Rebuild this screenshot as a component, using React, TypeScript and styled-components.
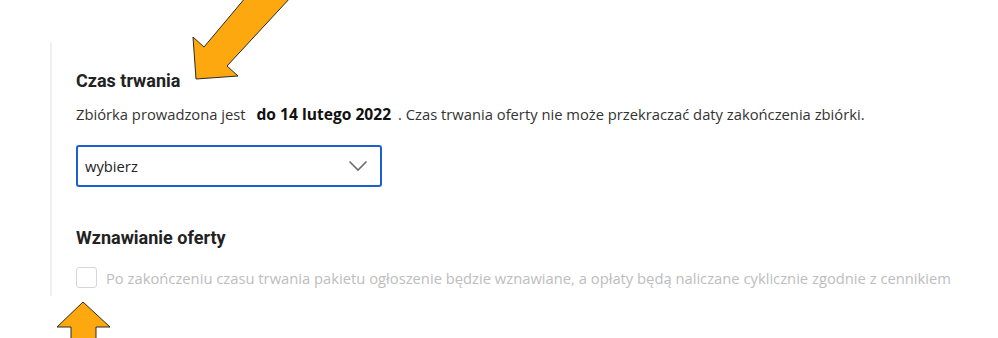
import React from "react";
import styled, {createGlobalStyle} from "styled-components";

const GlobalStyle = createGlobalStyle`
  html, body {
    margin: 0;
    padding: 0;
    background: #ffffff;
  }
  body {
    width: 998px;
    height: 338px;
    overflow: hidden;
    font-family: "Open Sans", "Liberation Sans", sans-serif;
    color: #2b2b2b;
  }
`;

const Page = styled.div`
  position: relative;
  width: 998px;
  height: 338px;
  padding: 42px 0 0 50px;
  box-sizing: border-box;
`;

const Section = styled.div`
  border-left: 2px solid #efefef;
  padding: 28px 0 8px 24px;
  height: 254px;
  box-sizing: border-box;
  display: flex;
  flex-direction: column;
`;

const Heading = styled.h3<{spaced?: boolean}>`
  margin: ${({spaced}) => (spaced ? "40px 0 0" : "0")};
  font-family: Roboto, "Liberation Sans", sans-serif;
  font-weight: 700;
  font-size: 18px;
  line-height: 22px;
  color: #222222;
`;

const Info = styled.p`
  margin: 12px 0 0;
  font-size: 14.75px;
  line-height: 20px;
  color: #333333;

  strong {
    font-size: 15.6px;
    font-weight: 700;
    color: #111111;
    margin: 0 7px 0 7px;
  }
`;

const Select = styled.div`
  margin-top: 21px;
  width: 306px;
  height: 42px;
  box-sizing: border-box;
  border: 2px solid #1d5fd1;
  border-radius: 3px;
  display: flex;
  align-items: center;
  justify-content: space-between;
  padding: 0 12px 0 7px;
  font-size: 14.75px;
  color: #222222;
`;

const CheckRow = styled.label`
  margin-top: 18px;
  display: flex;
  align-items: center;
  gap: 9px;
  font-size: 14.75px;
  color: #bdbdbd;
`;

const Box = styled.span`
  width: 21px;
  height: 21px;
  box-sizing: border-box;
  border: 1px solid #d6d6d6;
  border-radius: 3px;
  background: #ffffff;
`;

const Arrow = styled.svg`
  position: absolute;
  left: 0;
  top: 0;
  pointer-events: none;
`;

const Chevron = () => (
  <svg width="20" height="12" viewBox="0 0 20 12">
    <path d="M1.5 1.5 L10 10 L18.5 1.5" fill="none" stroke="#6b6b6b" strokeWidth="1.6" />
  </svg>
);

export default function App() {
  return (
    <>
      <GlobalStyle />
      <Page>
        <Section>
          <Heading>Czas trwania</Heading>
          <Info>
            Zbiórka prowadzona jest <strong>do 14 lutego 2022</strong>. Czas trwania oferty nie
            może przekraczać daty zakończenia zbiórki.
          </Info>
          <Select>
            <span>wybierz</span>
            <Chevron />
          </Select>
          <Heading spaced>Wznawianie oferty</Heading>
          <CheckRow>
            <Box />
            Po zakończeniu czasu trwania pakietu ogłoszenie będzie wznawiane, a opłaty będą
            naliczane cyklicznie zgodnie z cennikiem
          </CheckRow>
        </Section>
        <Arrow width="998" height="338" viewBox="0 0 998 338">
          <polygon
            points="246,-3 291,-3 227,66 238,76 196,79 193,37 204,47"
            fill="#fea80f"
            stroke="#2a2a2a"
            strokeWidth="1"
            strokeLinejoin="miter"
          />
          <polygon
            points="83,302 57,327 71,327 71,342 96,342 96,327 110,327"
            fill="#fea80f"
            stroke="#2a2a2a"
            strokeWidth="1"
          />
        </Arrow>
      </Page>
    </>
  );
}
